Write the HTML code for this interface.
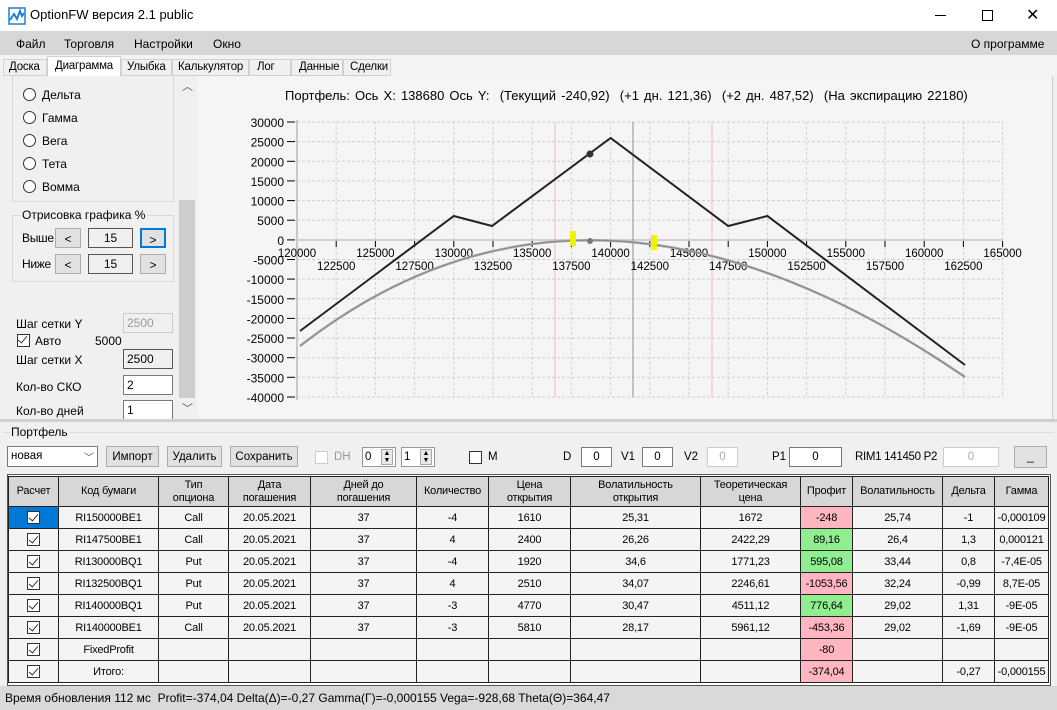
<!DOCTYPE html>
<html><head><meta charset="utf-8"><style>
*{box-sizing:border-box;margin:0;padding:0}
body{width:1057px;height:710px;position:relative;overflow:hidden;background:#f0f0f0;font-family:"Liberation Sans","DejaVu Sans",sans-serif;font-size:12px;color:#000}
.a{position:absolute;white-space:nowrap}
.btn{position:absolute;background:#e1e1e1;border:1px solid #adadad;text-align:center;line-height:20px}
.box{position:absolute;background:#fff;border:1px solid #7a7a7a;text-align:center;line-height:18px}
.radio{position:absolute;width:13px;height:13px;border:1px solid #333;border-radius:50%;background:#fff}
.cb{position:absolute;width:13px;height:13px;border:1px solid #333;background:#fff}
.tab{position:absolute;top:59px;height:17px;border:1px solid #d0d0d0;background:#f0f0f0;line-height:15px;font-size:11.5px;letter-spacing:-0.2px}
table{position:absolute;left:8px;top:476px;border-collapse:collapse;table-layout:fixed;width:1040px}
td{border:1px solid #222;background:#f4f4f4;text-align:center;height:22px;font-size:11px;padding:0;letter-spacing:-0.2px}
th{border:1px solid #222;background:#d7d7d7;font-weight:normal;font-size:11px;height:30px;line-height:13px;letter-spacing:-0.2px}
.p{background:#ffb6c1}.g{background:#90ee90}
.ck{display:inline-block;width:13px;height:13px;border:1px solid #333;background:#fff;vertical-align:middle;position:relative}
.ck:after{content:"";position:absolute;left:3px;top:0px;width:4px;height:8px;border:solid #333;border-width:0 1.5px 1.5px 0;transform:rotate(40deg)}
.tb{font-size:11.5px}
</style></head><body>
<!-- title bar -->
<div class="a" style="left:0;top:0;width:1057px;height:31px;background:#fff"></div>
<svg class="a" style="left:8px;top:7px" width="18" height="18" viewBox="0 0 18 18"><rect x="1" y="1" width="16" height="16" fill="#fff" stroke="#1e7fd8" stroke-width="1.5"/><path d="M2 13 L6 7 L9 12 L12 4 L14 9 L16 6" fill="none" stroke="#1e7fd8" stroke-width="2"/></svg>
<div class="a" style="left:30px;top:7px;font-size:13px">OptionFW версия 2.1 public</div>
<div class="a" style="left:935px;top:15px;width:11px;height:1px;background:#000"></div>
<div class="a" style="left:982px;top:10px;width:11px;height:11px;border:1px solid #000"></div>
<div class="a" style="left:1026px;top:5px;font-size:16px">✕</div>
<!-- menu -->
<div class="a" style="left:0;top:31px;width:1057px;height:24px;background:#d7d7d7"></div>
<div class="a" style="left:16px;top:37px">Файл</div>
<div class="a" style="left:64px;top:37px">Торговля</div>
<div class="a" style="left:134px;top:37px">Настройки</div>
<div class="a" style="left:213px;top:37px">Окно</div>
<div class="a" style="left:971px;top:37px">О программе</div>
<!-- tabs -->
<div class="a" style="left:0;top:55px;width:1057px;height:21px;background:#f3f3f3"></div>
<div class="tab" style="left:3px;width:44px;padding-left:5px">Доска</div>
<div class="a" style="left:47px;top:56px;width:74px;height:20px;background:#fff;border:1px solid #d0d0d0;border-bottom:none;padding-left:7px;line-height:18px;font-size:11.5px;letter-spacing:-0.2px">Диаграмма</div>
<div class="tab" style="left:121px;width:51px;padding-left:5px">Улыбка</div>
<div class="tab" style="left:172px;width:77px;padding-left:5px">Калькулятор</div>
<div class="tab" style="left:249px;width:42px;padding-left:7px">Лог</div>
<div class="tab" style="left:291px;width:52px;padding-left:7px">Данные</div>
<div class="tab" style="left:343px;width:48px;padding-left:6px">Сделки</div>
<!-- left panel -->
<div class="a" style="left:12px;top:75px;width:162px;height:127px;border:1px solid #d8d8d8;border-top:none"></div>
<div class="radio" style="left:23px;top:88px"></div><div class="a" style="left:42px;top:88px">Дельта</div>
<div class="radio" style="left:23px;top:111px"></div><div class="a" style="left:42px;top:111px">Гамма</div>
<div class="radio" style="left:23px;top:134px"></div><div class="a" style="left:42px;top:134px">Вега</div>
<div class="radio" style="left:23px;top:157px"></div><div class="a" style="left:42px;top:157px">Тета</div>
<div class="radio" style="left:23px;top:180px"></div><div class="a" style="left:42px;top:180px">Вомма</div>
<div class="a" style="left:12px;top:215px;width:162px;height:67px;border:1px solid #d8d8d8"></div>
<div class="a" style="left:20px;top:208px;background:#f0f0f0;padding:0 2px">Отрисовка графика %</div>
<div class="a" style="left:22px;top:231px;letter-spacing:-0.3px">Выше</div>
<div class="btn" style="left:55px;top:228px;width:26px;height:20px">&lt;</div>
<div class="box" style="left:88px;top:228px;width:45px;height:20px;background:#f0f0f0;border-color:#555">15</div>
<div class="btn" style="left:140px;top:228px;width:26px;height:20px;border:2px solid #0078d7">&gt;</div>
<div class="a" style="left:22px;top:257px;letter-spacing:-0.3px">Ниже</div>
<div class="btn" style="left:55px;top:254px;width:26px;height:20px">&lt;</div>
<div class="box" style="left:88px;top:254px;width:45px;height:20px;background:#f0f0f0;border-color:#555">15</div>
<div class="btn" style="left:140px;top:254px;width:26px;height:20px">&gt;</div>
<div class="a" style="left:16px;top:317px">Шаг сетки Y</div>
<div class="box" style="left:123px;top:313px;width:50px;height:20px;text-align:left;padding-left:3px;color:#999;border-color:#ccc;background:#f0f0f0">2500</div>
<div class="cb" style="left:17px;top:334px"></div><div class="a" style="left:17px;top:334px;width:13px;height:13px"><span class="ck" style="border:none;background:none;vertical-align:top"></span></div>
<div class="a" style="left:35px;top:334px">Авто</div><div class="a" style="left:95px;top:334px">5000</div>
<div class="a" style="left:16px;top:353px">Шаг сетки X</div>
<div class="box" style="left:123px;top:349px;width:50px;height:20px;text-align:left;padding-left:3px;background:#f0f0f0;border-color:#555">2500</div>
<div class="a" style="left:16px;top:380px">Кол-во СКО</div>
<div class="box" style="left:123px;top:375px;width:50px;height:20px;text-align:left;padding-left:3px">2</div>
<div class="a" style="left:16px;top:404px">Кол-во дней</div>
<div class="box" style="left:123px;top:400px;width:50px;height:20px;text-align:left;padding-left:3px">1</div>
<div class="a" style="left:179px;top:76px;width:16px;height:342px;background:#f0f0f0"></div>
<div class="a" style="left:179px;top:200px;width:16px;height:198px;background:#cdcdcd"></div>
<div class="a" style="left:182px;top:78px;font-size:11px;color:#555">︿</div>
<div class="a" style="left:182px;top:400px;font-size:11px;color:#555">﹀</div>
<!-- chart area -->
<div class="a" style="left:197px;top:76px;width:856px;height:343px;background:#f5f5f5;border-right:1px solid #ccc"></div>
<div class="a" style="left:285px;top:88px;font-size:13px;word-spacing:1.5px">Портфель: Ось X: 138680 Ось Y:&nbsp; (Текущий -240,92)&nbsp; (+1 дн. 121,36)&nbsp; (+2 дн. 487,52)&nbsp; (На экспирацию 22180)</div>
<svg class="a" style="left:0;top:0" width="1057" height="420" font-family="Liberation Sans, sans-serif" font-size="12">
<g stroke="#d0d0d0" stroke-dasharray="3,2" stroke-width="1">
<line x1="297" y1="122" x2="1003" y2="122"/><line x1="297" y1="141.6" x2="1003" y2="141.6"/><line x1="297" y1="161.3" x2="1003" y2="161.3"/><line x1="297" y1="180.9" x2="1003" y2="180.9"/><line x1="297" y1="200.6" x2="1003" y2="200.6"/><line x1="297" y1="220.2" x2="1003" y2="220.2"/><line x1="297" y1="259.5" x2="1003" y2="259.5"/><line x1="297" y1="279.1" x2="1003" y2="279.1"/><line x1="297" y1="298.8" x2="1003" y2="298.8"/><line x1="297" y1="318.4" x2="1003" y2="318.4"/><line x1="297" y1="338" x2="1003" y2="338"/><line x1="297" y1="357.7" x2="1003" y2="357.7"/><line x1="297" y1="377.3" x2="1003" y2="377.3"/><line x1="297" y1="397" x2="1003" y2="397"/>
<line x1="336.2" y1="122" x2="336.2" y2="397"/><line x1="375.4" y1="122" x2="375.4" y2="397"/><line x1="414.6" y1="122" x2="414.6" y2="397"/><line x1="453.8" y1="122" x2="453.8" y2="397"/><line x1="493" y1="122" x2="493" y2="397"/><line x1="532.2" y1="122" x2="532.2" y2="397"/><line x1="571.4" y1="122" x2="571.4" y2="397"/><line x1="610.6" y1="122" x2="610.6" y2="397"/><line x1="649.8" y1="122" x2="649.8" y2="397"/><line x1="689" y1="122" x2="689" y2="397"/><line x1="728.2" y1="122" x2="728.2" y2="397"/><line x1="767.4" y1="122" x2="767.4" y2="397"/><line x1="806.6" y1="122" x2="806.6" y2="397"/><line x1="845.8" y1="122" x2="845.8" y2="397"/><line x1="885" y1="122" x2="885" y2="397"/><line x1="924.2" y1="122" x2="924.2" y2="397"/><line x1="963.4" y1="122" x2="963.4" y2="397"/><line x1="1002.6" y1="122" x2="1002.6" y2="397"/>
</g>
<line x1="297" y1="120" x2="297" y2="400" stroke="#c8c8c8" stroke-width="2"/>
<line x1="297" y1="240" x2="1003" y2="240" stroke="#d0d0d0" stroke-width="2"/>
<line x1="555" y1="122" x2="555" y2="397" stroke="#f5b8c0"/>
<line x1="712" y1="122" x2="712" y2="397" stroke="#f5b8c0"/>
<line x1="633" y1="122" x2="633" y2="397" stroke="#8a8e99"/>
<g stroke="#000">
<line x1="287" y1="122" x2="295" y2="122"/><line x1="287" y1="141.6" x2="295" y2="141.6"/><line x1="287" y1="161.3" x2="295" y2="161.3"/><line x1="287" y1="180.9" x2="295" y2="180.9"/><line x1="287" y1="200.6" x2="295" y2="200.6"/><line x1="287" y1="220.2" x2="295" y2="220.2"/><line x1="287" y1="239.9" x2="295" y2="239.9"/><line x1="287" y1="259.5" x2="295" y2="259.5"/><line x1="287" y1="279.1" x2="295" y2="279.1"/><line x1="287" y1="298.8" x2="295" y2="298.8"/><line x1="287" y1="318.4" x2="295" y2="318.4"/><line x1="287" y1="338" x2="295" y2="338"/><line x1="287" y1="357.7" x2="295" y2="357.7"/><line x1="287" y1="377.3" x2="295" y2="377.3"/><line x1="287" y1="397" x2="295" y2="397"/>
<line x1="336.2" y1="241" x2="336.2" y2="247"/><line x1="375.4" y1="241" x2="375.4" y2="247"/><line x1="414.6" y1="241" x2="414.6" y2="247"/><line x1="453.8" y1="241" x2="453.8" y2="247"/><line x1="493" y1="241" x2="493" y2="247"/><line x1="532.2" y1="241" x2="532.2" y2="247"/><line x1="571.4" y1="241" x2="571.4" y2="247"/><line x1="610.6" y1="241" x2="610.6" y2="247"/><line x1="649.8" y1="241" x2="649.8" y2="247"/><line x1="689" y1="241" x2="689" y2="247"/><line x1="728.2" y1="241" x2="728.2" y2="247"/><line x1="767.4" y1="241" x2="767.4" y2="247"/><line x1="806.6" y1="241" x2="806.6" y2="247"/><line x1="845.8" y1="241" x2="845.8" y2="247"/><line x1="885" y1="241" x2="885" y2="247"/><line x1="924.2" y1="241" x2="924.2" y2="247"/><line x1="963.4" y1="241" x2="963.4" y2="247"/><line x1="1002.6" y1="241" x2="1002.6" y2="247"/>
</g>
<g text-anchor="end">
<text x="284" y="127">30000</text><text x="284" y="146.6">25000</text><text x="284" y="166.3">20000</text><text x="284" y="185.9">15000</text><text x="284" y="205.6">10000</text><text x="284" y="225.2">5000</text><text x="284" y="244.9">0</text><text x="284" y="264.5">-5000</text><text x="284" y="284.1">-10000</text><text x="284" y="303.8">-15000</text><text x="284" y="323.4">-20000</text><text x="284" y="343">-25000</text><text x="284" y="362.7">-30000</text><text x="284" y="382.3">-35000</text><text x="284" y="402">-40000</text>
</g>
<g text-anchor="middle" font-size="11.5">
<text x="297" y="257">120000</text><text x="375.4" y="257">125000</text><text x="453.8" y="257">130000</text><text x="532.2" y="257">135000</text><text x="610.6" y="257">140000</text><text x="689" y="257">145000</text><text x="767.4" y="257">150000</text><text x="845.8" y="257">155000</text><text x="924.2" y="257">160000</text><text x="1002.6" y="257">165000</text>
<text x="336.2" y="270">122500</text><text x="414.6" y="270">127500</text><text x="493" y="270">132500</text><text x="571.4" y="270">137500</text><text x="649.8" y="270">142500</text><text x="728.2" y="270">147500</text><text x="806.6" y="270">152500</text><text x="885" y="270">157500</text><text x="963.4" y="270">162500</text>
</g>
<path d="M300 346 Q590 120 965 377" fill="none" stroke="#aaa" stroke-width="2.5"/>
<path d="M300 346 Q590 120 965 377" fill="none" stroke="#888" stroke-width="1"/>
<polyline points="300,331 453.8,216 492,226 610.6,138 728.2,226 767.4,216 965,365" fill="none" stroke="#222" stroke-width="2"/>
<rect x="570" y="231" width="6" height="15" fill="#f2f200"/>
<rect x="651" y="235" width="6" height="15" fill="#f2f200"/>
<circle cx="590" cy="154" r="3.5" fill="#333"/>
<circle cx="590" cy="241" r="3" fill="#777"/>
</svg>
<!-- splitter -->
<div class="a" style="left:0;top:419px;width:1057px;height:3px;background:#d0d0d0"></div>
<!-- portfolio -->
<div class="a" style="left:3px;top:432px;width:1051px;height:1px;background:#dcdcdc"></div>
<div class="a" style="left:10px;top:425px;background:#f0f0f0;padding:0 1px">Портфель</div>
<div class="box tb" style="left:7px;top:446px;width:91px;height:21px;text-align:left;padding-left:3px;line-height:19px">новая</div>
<div class="a" style="left:84px;top:449px;font-size:10px;color:#555">﹀</div>
<div class="btn tb" style="left:106px;top:446px;width:53px;height:21px">Импорт</div>
<div class="btn tb" style="left:167px;top:446px;width:55px;height:21px">Удалить</div>
<div class="btn tb" style="left:230px;top:446px;width:68px;height:21px">Сохранить</div>
<div class="cb" style="left:315px;top:451px;border-color:#ccc"></div><div class="a tb" style="left:334px;top:451px;color:#999">DH</div>
<div class="box tb" style="left:362px;top:447px;width:34px;height:20px;text-align:left;padding-left:2px;border-color:#999">0</div>
<div class="a" style="left:381px;top:449px;width:12px;height:16px;border:1px solid #aaa;background:#e8e8e8;font-size:7px;line-height:7px;text-align:center">▲<br>▼</div>
<div class="box tb" style="left:401px;top:447px;width:34px;height:20px;text-align:left;padding-left:2px;border-color:#999">1</div>
<div class="a" style="left:420px;top:449px;width:12px;height:16px;border:1px solid #aaa;background:#e8e8e8;font-size:7px;line-height:7px;text-align:center">▲<br>▼</div>
<div class="cb" style="left:469px;top:451px"></div><div class="a tb" style="left:488px;top:451px">M</div>
<div class="a tb" style="left:563px;top:451px">D</div>
<div class="box tb" style="left:581px;top:447px;width:31px;height:20px">0</div>
<div class="a tb" style="left:621px;top:451px">V1</div>
<div class="box tb" style="left:642px;top:447px;width:31px;height:20px">0</div>
<div class="a tb" style="left:684px;top:451px">V2</div>
<div class="box tb" style="left:707px;top:447px;width:31px;height:20px;color:#aaa;border-color:#ccc">0</div>
<div class="a tb" style="left:772px;top:451px">P1</div>
<div class="box tb" style="left:789px;top:447px;width:53px;height:20px">0</div>
<div class="a tb" style="left:855px;top:451px;letter-spacing:-0.3px">RIM1 141450&nbsp;P2</div>
<div class="box tb" style="left:943px;top:447px;width:56px;height:20px;color:#aaa;border-color:#ccc">0</div>
<div class="btn" style="left:1014px;top:446px;width:33px;height:22px;line-height:18px">_</div>
<!-- table -->
<div class="a" style="left:7px;top:474px;width:1044px;height:212px;background:#fff;border:1px solid #555"></div>
<table>
<colgroup><col style="width:50px"><col style="width:100px"><col style="width:70px"><col style="width:82px"><col style="width:106px"><col style="width:72px"><col style="width:82px"><col style="width:130px"><col style="width:100px"><col style="width:52px"><col style="width:90px"><col style="width:52px"><col style="width:54px"></colgroup>
<tr><th>Расчет</th><th>Код бумаги</th><th>Тип<br>опциона</th><th>Дата<br>погашения</th><th>Дней до<br>погашения</th><th>Количество</th><th>Цена<br>открытия</th><th>Волатильность<br>открытия</th><th>Теоретическая<br>цена</th><th>Профит</th><th>Волатильность</th><th>Дельта</th><th>Гамма</th></tr>
<tr><td style="background:#0078d7"><span class="ck"></span></td><td>RI150000BE1</td><td>Call</td><td>20.05.2021</td><td>37</td><td>-4</td><td>1610</td><td>25,31</td><td>1672</td><td class="p">-248</td><td>25,74</td><td>-1</td><td>-0,000109</td></tr>
<tr><td><span class="ck"></span></td><td>RI147500BE1</td><td>Call</td><td>20.05.2021</td><td>37</td><td>4</td><td>2400</td><td>26,26</td><td>2422,29</td><td class="g">89,16</td><td>26,4</td><td>1,3</td><td>0,000121</td></tr>
<tr><td><span class="ck"></span></td><td>RI130000BQ1</td><td>Put</td><td>20.05.2021</td><td>37</td><td>-4</td><td>1920</td><td>34,6</td><td>1771,23</td><td class="g">595,08</td><td>33,44</td><td>0,8</td><td>-7,4E-05</td></tr>
<tr><td><span class="ck"></span></td><td>RI132500BQ1</td><td>Put</td><td>20.05.2021</td><td>37</td><td>4</td><td>2510</td><td>34,07</td><td>2246,61</td><td class="p">-1053,56</td><td>32,24</td><td>-0,99</td><td>8,7E-05</td></tr>
<tr><td><span class="ck"></span></td><td>RI140000BQ1</td><td>Put</td><td>20.05.2021</td><td>37</td><td>-3</td><td>4770</td><td>30,47</td><td>4511,12</td><td class="g">776,64</td><td>29,02</td><td>1,31</td><td>-9E-05</td></tr>
<tr><td><span class="ck"></span></td><td>RI140000BE1</td><td>Call</td><td>20.05.2021</td><td>37</td><td>-3</td><td>5810</td><td>28,17</td><td>5961,12</td><td class="p">-453,36</td><td>29,02</td><td>-1,69</td><td>-9E-05</td></tr>
<tr><td><span class="ck"></span></td><td>FixedProfit</td><td></td><td></td><td></td><td></td><td></td><td></td><td></td><td class="p">-80</td><td></td><td></td><td></td></tr>
<tr><td><span class="ck"></span></td><td>Итого:</td><td></td><td></td><td></td><td></td><td></td><td></td><td></td><td class="p">-374,04</td><td></td><td>-0,27</td><td>-0,000155</td></tr>
</table>
<!-- status -->
<div class="a" style="left:0;top:686px;width:1057px;height:24px;background:#d9d9d9"></div>
<div class="a" style="left:5px;top:691px">Время обновления 112 мс&nbsp; Profit=-374,04 Delta(Δ)=-0,27 Gamma(Γ)=-0,000155 Vega=-928,68 Theta(Θ)=364,47</div>
</body></html>
